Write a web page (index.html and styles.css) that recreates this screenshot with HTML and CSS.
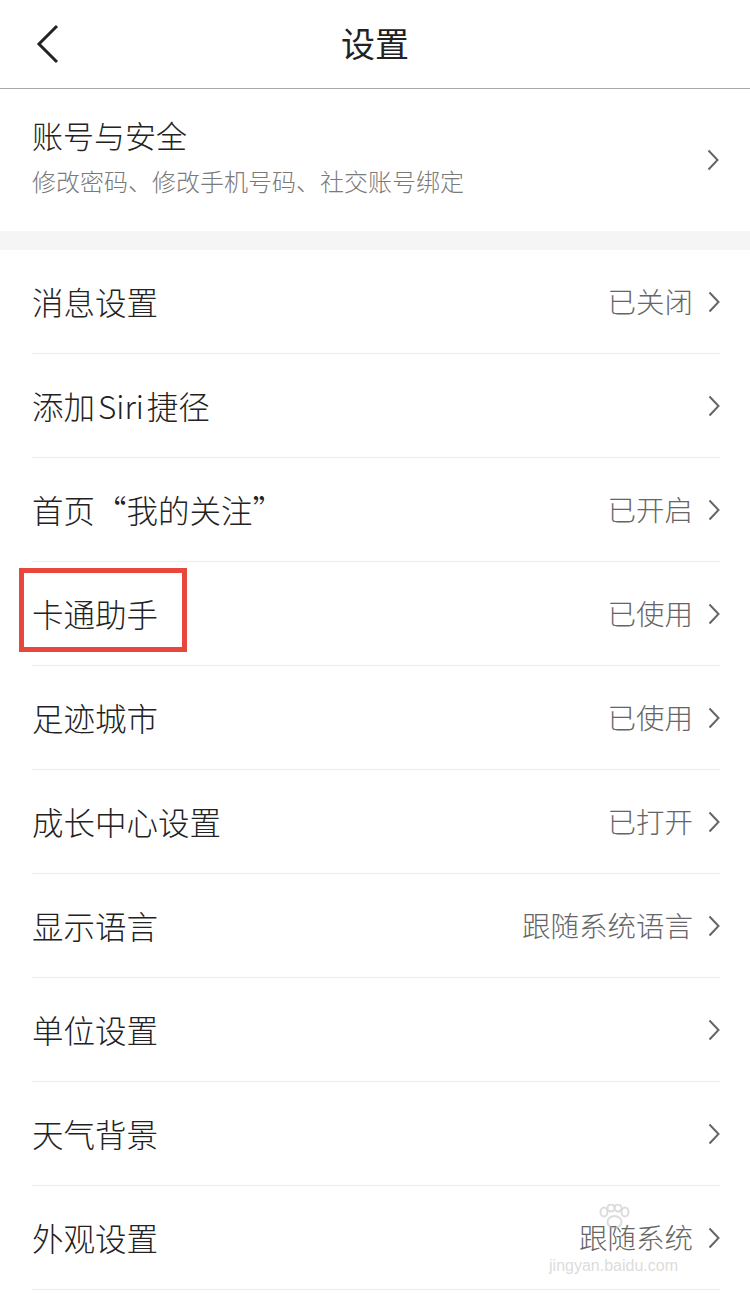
FILE: index.html
```html
<!DOCTYPE html>
<html>
<head>
<meta charset="utf-8">
<title>设置</title>
<link rel="stylesheet" href="styles.css">
</head>
<body>
<div class="header">
  <svg class="back" width="26" height="40" viewBox="0 0 26 40"><path d="M22 2 L4 20 L22 38" fill="none" stroke="#222" stroke-width="3"/></svg>
  <div class="title">设置</div>
</div>

<div class="account">
  <div class="account-text">
    <div class="account-title">账号与安全</div>
    <div class="account-sub">修改密码、修改手机号码、社交账号绑定</div>
  </div>
  <svg class="arrow" width="12" height="22" viewBox="0 0 12 22"><path d="M1.5 1.5 L10.5 11 L1.5 20.5" fill="none" stroke="#666" stroke-width="2"/></svg>
</div>

<div class="gap"></div>

<ul class="list">
  <li class="row"><span class="name">消息设置</span><span class="value">已关闭</span><svg class="arrow" width="12" height="22" viewBox="0 0 12 22"><path d="M1.5 1.5 L10.5 11 L1.5 20.5" fill="none" stroke="#666" stroke-width="2"/></svg></li>
  <li class="row"><span class="name">添加<span class="latin">Siri</span>捷径</span><span class="value"></span><svg class="arrow" width="12" height="22" viewBox="0 0 12 22"><path d="M1.5 1.5 L10.5 11 L1.5 20.5" fill="none" stroke="#666" stroke-width="2"/></svg></li>
  <li class="row"><span class="name">首页“我的关注”</span><span class="value">已开启</span><svg class="arrow" width="12" height="22" viewBox="0 0 12 22"><path d="M1.5 1.5 L10.5 11 L1.5 20.5" fill="none" stroke="#666" stroke-width="2"/></svg></li>
  <li class="row"><span class="name marked">卡通助手</span><span class="value">已使用</span><svg class="arrow" width="12" height="22" viewBox="0 0 12 22"><path d="M1.5 1.5 L10.5 11 L1.5 20.5" fill="none" stroke="#666" stroke-width="2"/></svg></li>
  <li class="row"><span class="name">足迹城市</span><span class="value">已使用</span><svg class="arrow" width="12" height="22" viewBox="0 0 12 22"><path d="M1.5 1.5 L10.5 11 L1.5 20.5" fill="none" stroke="#666" stroke-width="2"/></svg></li>
  <li class="row"><span class="name">成长中心设置</span><span class="value">已打开</span><svg class="arrow" width="12" height="22" viewBox="0 0 12 22"><path d="M1.5 1.5 L10.5 11 L1.5 20.5" fill="none" stroke="#666" stroke-width="2"/></svg></li>
  <li class="row"><span class="name">显示语言</span><span class="value">跟随系统语言</span><svg class="arrow" width="12" height="22" viewBox="0 0 12 22"><path d="M1.5 1.5 L10.5 11 L1.5 20.5" fill="none" stroke="#666" stroke-width="2"/></svg></li>
  <li class="row"><span class="name">单位设置</span><span class="value"></span><svg class="arrow" width="12" height="22" viewBox="0 0 12 22"><path d="M1.5 1.5 L10.5 11 L1.5 20.5" fill="none" stroke="#666" stroke-width="2"/></svg></li>
  <li class="row"><span class="name">天气背景</span><span class="value"></span><svg class="arrow" width="12" height="22" viewBox="0 0 12 22"><path d="M1.5 1.5 L10.5 11 L1.5 20.5" fill="none" stroke="#666" stroke-width="2"/></svg></li>
  <li class="row"><span class="name">外观设置</span><span class="value">跟随系统</span><svg class="arrow" width="12" height="22" viewBox="0 0 12 22"><path d="M1.5 1.5 L10.5 11 L1.5 20.5" fill="none" stroke="#666" stroke-width="2"/></svg>
    <div class="watermark">
      <svg class="wm-paw" width="34" height="26" viewBox="0 0 34 26"><g fill="none" stroke="#BBBBBB" stroke-width="2"><ellipse cx="7" cy="8" rx="3.5" ry="4.5"/><ellipse cx="14" cy="4" rx="3.5" ry="3.5"/><ellipse cx="21" cy="4" rx="3.5" ry="3.5"/><ellipse cx="28" cy="8" rx="3.5" ry="4.5"/><ellipse cx="17.5" cy="18" rx="7" ry="6"/></g></svg>
      <span class="wm-url">jingyan.baidu.com</span>
    </div>
  </li>
</ul>
</body>
</html>
```

FILE: styles.css
```css
body {margin:0; background-color:#FFFFFF; font-family:"Noto Sans CJK SC", "Noto Sans", sans-serif; font-weight:300; color:#222222; width:750px; height:1294px; overflow:hidden}

.header {position:relative; height:88px; display:flex; align-items:center; justify-content:center; border-bottom:1.5px solid #AAAAAA}
.back {position:absolute; left:35px; top:24px}
.title {font-size:34px; line-height:1; color:#222222; font-weight:400; margin-top:-2px}

.account {height:142px; display:flex; align-items:center; padding:0 31px 0 32px}
.account-text {flex:1}
.account-title {font-size:31px; line-height:1; margin-top:-8px}
.account-sub {font-size:24px; line-height:1; color:#7A7A7A; margin-top:19px}

.gap {height:19px; background-color:#F5F5F5}

.list {list-style:none; margin:0; padding:0 30px 0 32px}
.row {position:relative; height:103px; display:flex; align-items:center; border-bottom:1px solid #ECECEC}
.name {font-size:31.5px; line-height:1; flex:1; color:#222222}
.latin {margin:0 3px}
.value {font-size:28.5px; line-height:1; color:#666666; margin-right:15px}
.arrow {flex:none; display:block}

.marked::before {content:""; position:absolute; left:-13px; top:6px; width:158px; height:74px; border:5px solid #E8473D}

.watermark {position:absolute; right:42px; top:18px; display:flex; flex-direction:column; align-items:center; opacity:0.5; pointer-events:none}
.wm-url {font-family:"Liberation Sans", sans-serif; font-size:16px; font-weight:400; color:#BBBBBB; margin-top:27px}
```
